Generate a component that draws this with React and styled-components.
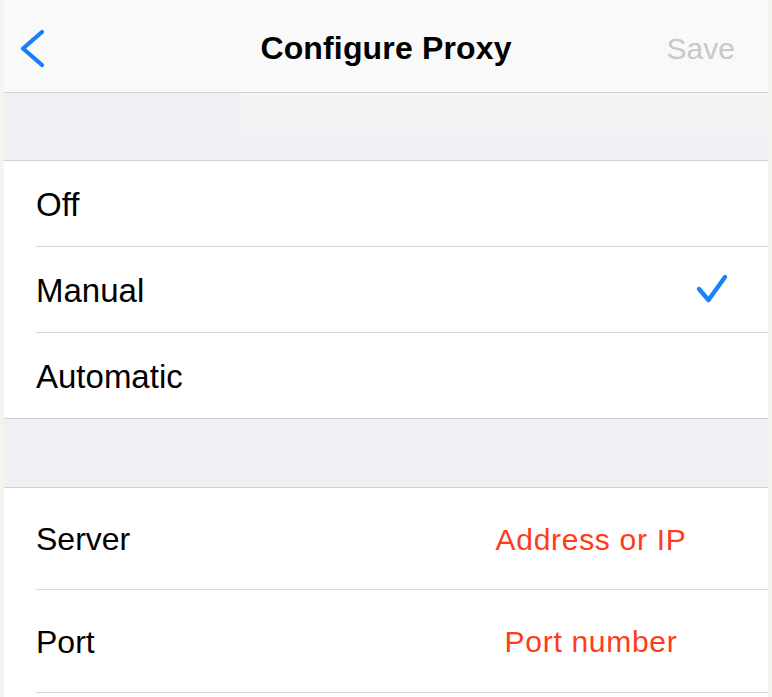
import React from "react";
import styled, { createGlobalStyle } from "styled-components";

const Global = createGlobalStyle`
  html, body { margin: 0; padding: 0; background: #f4f3ee; }
  body { font-family: "Liberation Sans", Arial, sans-serif; -webkit-font-smoothing: antialiased; }
`;

const Screen = styled.div`
  margin: 0 4px;
  width: 764px;
  height: 697px;
  background: #ffffff;
  overflow: hidden;
  display: flex;
  flex-direction: column;
`;

const NavBar = styled.header`
  background: #f9f9f9;
  border-bottom: 1px solid #d3d3d6;
  display: grid;
  grid-template-columns: 1fr auto 1fr;
  align-items: center;
  padding: 5px 13px 0 13px;
  height: 87px;
`;

const BackButton = styled.button`
  justify-self: start;
  background: none;
  border: 0;
  padding: 0;
  width: 32px;
  height: 46px;
  display: flex;
  cursor: pointer;
`;

const Title = styled.h1`
  margin: 0;
  font-size: 32px;
  font-weight: 700;
  color: #000;
  letter-spacing: 0.15px;
`;

const SaveButton = styled.span`
  justify-self: end;
  padding-right: 20px;
  font-size: 30px;
  color: #c8c8cc;
`;

const Spacer = styled.div`
  height: ${(p) => p.h}px;
  background: #efeff4;
  display: flex;
  align-items: flex-start;
`;

const Ghost = styled.div`
  margin-left: 236px;
  flex: 1;
  height: 43px;
  background: #f3f3f6;
`;

const Group = styled.section`
  border-top: 1px solid #d0d0d4;
  border-bottom: ${(p) => (p.closed ? "1px solid #d0d0d4" : "0")};
  background: #fff;
`;

const Row = styled.div`
  height: ${(p) => p.h}px;
  display: flex;
  align-items: center;
  margin-left: 32px;
  padding-right: ${(p) => p.pr || 32}px;
  border-bottom: ${(p) => (p.last ? "0" : "1px solid #d8d8dc")};
`;

const Label = styled.span`
  flex: 1;
  font-size: ${(p) => p.size || 33}px;
  color: #000;
  padding-top: 2px;
`;

const Value = styled.span`
  width: 290px;
  text-align: center;
  font-size: 30px;
  letter-spacing: 0.7px;
  color: #ff3b1a;
  padding-top: 2px;
`;

const Check = () => (
  <svg width="34" height="34" viewBox="0 0 34 34" fill="none">
    <polyline
      points="4,16 13.5,27 30,4"
      stroke="#1a82fb"
      strokeWidth="4.4"
      strokeLinecap="round"
      strokeLinejoin="round"
    />
  </svg>
);

const Chevron = () => (
  <svg width="32" height="46" viewBox="0 0 32 46" fill="none">
    <polyline
      points="25,6 6,22.5 25,39"
      stroke="#147efb"
      strokeWidth="4.2"
      strokeLinecap="round"
      strokeLinejoin="round"
    />
  </svg>
);

export default function App() {
  return (
    <>
      <Global />
      <Screen>
        <NavBar>
          <BackButton aria-label="Back">
            <Chevron />
          </BackButton>
          <Title>Configure Proxy</Title>
          <SaveButton>Save</SaveButton>
        </NavBar>
        <Spacer h={67}>
          <Ghost />
        </Spacer>
        <Group closed>
          <Row h={85}>
            <Label>Off</Label>
          </Row>
          <Row h={85} pr={39}>
            <Label>Manual</Label>
            <Check />
          </Row>
          <Row h={85} last>
            <Label>Automatic</Label>
          </Row>
        </Group>
        <Spacer h={68} />
        <Group>
          <Row h={101}>
            <Label size={32}>Server</Label>
            <Value>Address or IP</Value>
          </Row>
          <Row h={102}>
            <Label size={32}>Port</Label>
            <Value>Port number</Value>
          </Row>
        </Group>
      </Screen>
    </>
  );
}
